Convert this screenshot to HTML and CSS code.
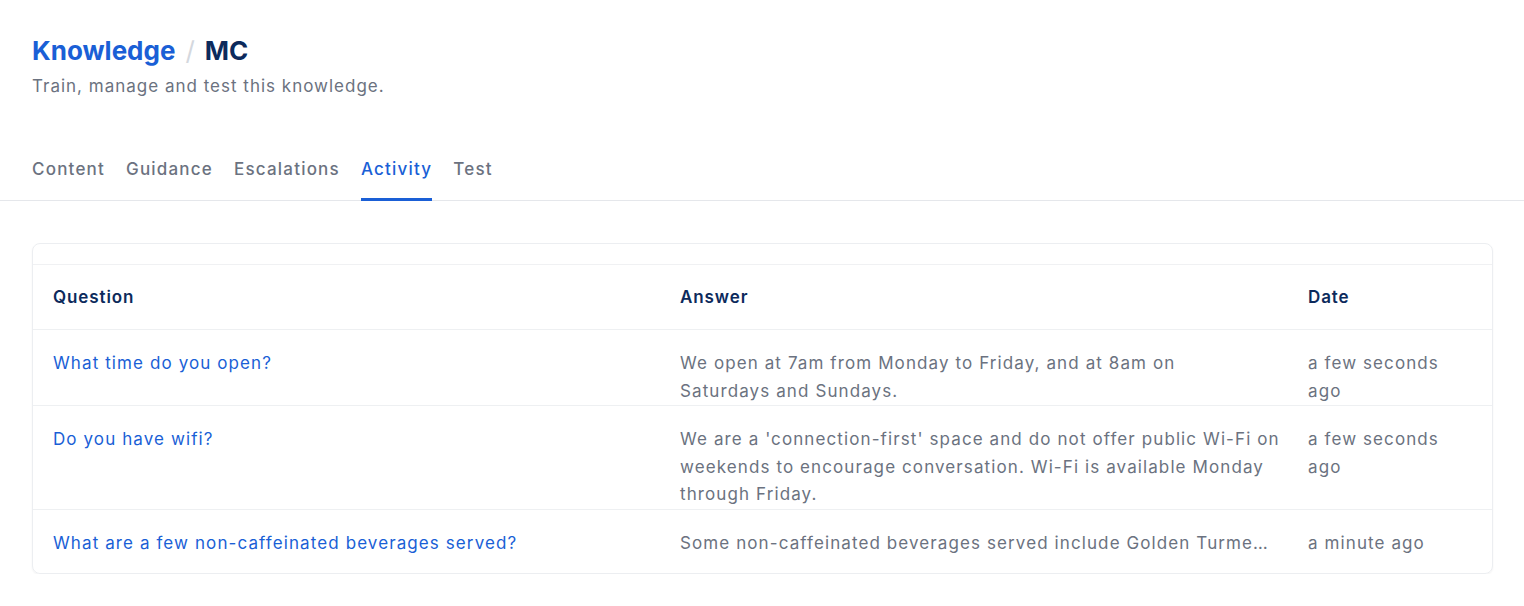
FILE: index.html
```html
<!DOCTYPE html>
<html lang="en">
<head>
<meta charset="utf-8">
<title>Knowledge / MC</title>
<link rel="stylesheet" href="styles.css">
</head>
<body>
<header class="page-head">
  <h1 class="crumbs"><span class="crumb-link">Knowledge</span><span class="crumb-sep">/</span><span class="crumb-current">MC</span></h1>
  <p class="subtitle">Train, manage and test this knowledge.</p>
</header>
<nav class="tabs">
  <a class="tab">Content</a>
  <a class="tab">Guidance</a>
  <a class="tab">Escalations</a>
  <a class="tab active">Activity</a>
  <a class="tab">Test</a>
</nav>
<main class="content">
  <div class="card">
    <div class="card-top"></div>
    <table class="activity">
      <colgroup><col class="c-q"><col class="c-a"><col class="c-d"></colgroup>
      <thead>
        <tr><th>Question</th><th>Answer</th><th>Date</th></tr>
      </thead>
      <tbody>
        <tr>
          <td class="q">What time do you open?</td>
          <td class="a">We open at 7am from Monday to Friday, and at 8am on Saturdays&nbsp;and Sundays.</td>
          <td class="d">a few seconds ago</td>
        </tr>
        <tr>
          <td class="q">Do you have wifi?</td>
          <td class="a">We are a 'connection-first' space and do not offer public Wi-Fi on weekends to encourage conversation. Wi-Fi is available Monday through Friday.</td>
          <td class="d">a few seconds ago</td>
        </tr>
        <tr>
          <td class="q">What are a few non-caffeinated beverages served?</td>
          <td class="a"><div class="clip">Some non-caffeinated beverages served include Golden Turme…</div></td>
          <td class="d">a minute ago</td>
        </tr>
      </tbody>
    </table>
  </div>
</main>
</body>
</html>
```
FILE: styles.css
```css
* { box-sizing: border-box; }
html, body { margin: 0; padding: 0; background: #ffffff; }
body {
  font-family: "Inter", "Noto Sans", sans-serif;
  color: #6b7280;
  -webkit-font-smoothing: antialiased;
}
.page-head { padding: 32px 32px 0; }
.crumbs {
  margin: 0;
  font-size: 26px;
  line-height: 38px;
  font-weight: 700;
  display: flex;
  align-items: baseline;
}
.crumb-link { color: #1a5fd6; }
.crumb-sep { color: #d4d8de; font-weight: 400; margin: 0 10px; }
.crumb-current { color: #0c2a5c; }
.subtitle {
  margin: 3px 0 0;
  font-size: 17px;
  line-height: 26px;
  letter-spacing: 1px;
  color: #6b7280;
}
.tabs {
  display: flex;
  gap: 21px;
  padding: 0 32px;
  margin-top: 53px;
  border-bottom: 1px solid #e5e7eb;
}
.tab {
  display: block;
  font-size: 17px;
  font-weight: 500;
  line-height: 26px;
  letter-spacing: 1.2px;
  padding: 4px 0 16px;
  color: #6b7280;
  border-bottom: 3px solid transparent;
  margin-bottom: -1px;
  cursor: pointer;
}
.tab.active { color: #1a5fd6; border-bottom-color: #1a5fd6; }
.content { padding: 42px 31px 0 32px; }
.card {
  border: 1px solid #eceef1;
  border-radius: 8px;
  box-shadow: 0 1px 2px rgba(0,0,0,0.05);
  overflow: hidden;
}
.card-top { height: 20px; }
.activity {
  width: 100%;
  border-collapse: collapse;
  table-layout: fixed;
  font-size: 17px;
  letter-spacing: 1.1px;
}
.c-q { width: 627px; }
.c-a { width: 628px; }
.c-d { width: auto; }
.activity th {
  text-align: left;
  font-weight: 600;
  color: #0c2a5c;
  height: 65px;
  padding: 0 20px;
  letter-spacing: 0.9px;
  border-top: 1px solid #f0f1f3;
  border-bottom: 1px solid #eef0f2;
  vertical-align: middle;
}
.activity td {
  height: 64px;
  padding: 20px 20px 0;
  line-height: 27.5px;
  vertical-align: top;
  border-bottom: 1px solid #eef0f2;
}
.activity tbody tr:last-child td { border-bottom: none; }
.activity td.q { color: #1a5fd6; }
.activity td.a { color: #6b7280; padding-right: 4px; }
.activity td.d { color: #6b7280; padding-right: 21px; }
.clip { white-space: nowrap; overflow: hidden; text-overflow: ellipsis; margin-right: 10px; }
```
